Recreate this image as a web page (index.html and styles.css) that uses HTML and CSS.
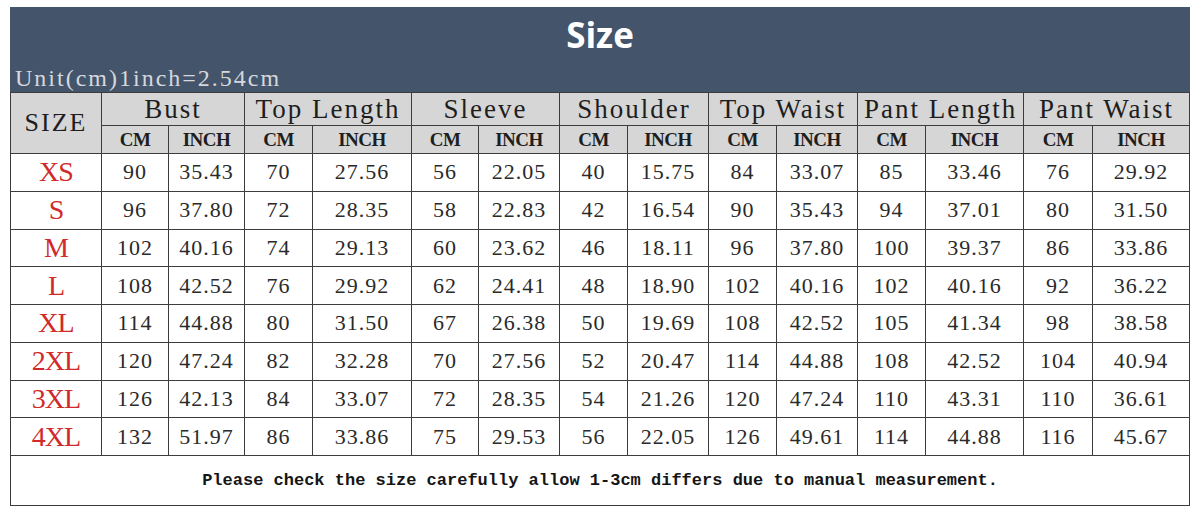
FILE: index.html
```html
<!DOCTYPE html>
<html lang="en">
<head>
  <meta charset="UTF-8">
  <meta name="viewport" content="width=device-width, initial-scale=1.0">
  <title>Size Chart</title>
  <link rel="stylesheet" href="styles.css">
</head>
<body>
  <div class="chart">
    <header class="chart-head">
      <h1>Size</h1>
      <p class="unit">Unit(cm)1inch=2.54cm</p>
    </header>
    <table class="size-table">
      <colgroup>
        <col style="width:91px">
        <col style="width:67px"><col style="width:76px">
        <col style="width:68px"><col style="width:99px">
        <col style="width:67px"><col style="width:81px">
        <col style="width:68px"><col style="width:81px">
        <col style="width:68px"><col style="width:81px">
        <col style="width:68px"><col style="width:98px">
        <col style="width:69px"><col style="width:97px">
      </colgroup>
      <thead>
        <tr class="group-row">
          <th rowspan="2" class="size-head">SIZE</th>
          <th colspan="2">Bust</th>
          <th colspan="2">Top Length</th>
          <th colspan="2">Sleeve</th>
          <th colspan="2">Shoulder</th>
          <th colspan="2">Top Waist</th>
          <th colspan="2">Pant Length</th>
          <th colspan="2">Pant Waist</th>
        </tr>
        <tr class="unit-row">
          <th>CM</th><th>INCH</th>
          <th>CM</th><th>INCH</th>
          <th>CM</th><th>INCH</th>
          <th>CM</th><th>INCH</th>
          <th>CM</th><th>INCH</th>
          <th>CM</th><th>INCH</th>
          <th>CM</th><th>INCH</th>
        </tr>
      </thead>
      <tbody>
        <tr>
          <td class="size">XS</td>
          <td>90</td><td>35.43</td><td>70</td><td>27.56</td><td>56</td><td>22.05</td><td>40</td><td>15.75</td>
          <td>84</td><td>33.07</td><td>85</td><td>33.46</td><td>76</td><td>29.92</td>
        </tr>
        <tr>
          <td class="size">S</td>
          <td>96</td><td>37.80</td><td>72</td><td>28.35</td><td>58</td><td>22.83</td><td>42</td><td>16.54</td>
          <td>90</td><td>35.43</td><td>94</td><td>37.01</td><td>80</td><td>31.50</td>
        </tr>
        <tr>
          <td class="size">M</td>
          <td>102</td><td>40.16</td><td>74</td><td>29.13</td><td>60</td><td>23.62</td><td>46</td><td>18.11</td>
          <td>96</td><td>37.80</td><td>100</td><td>39.37</td><td>86</td><td>33.86</td>
        </tr>
        <tr>
          <td class="size">L</td>
          <td>108</td><td>42.52</td><td>76</td><td>29.92</td><td>62</td><td>24.41</td><td>48</td><td>18.90</td>
          <td>102</td><td>40.16</td><td>102</td><td>40.16</td><td>92</td><td>36.22</td>
        </tr>
        <tr>
          <td class="size">XL</td>
          <td>114</td><td>44.88</td><td>80</td><td>31.50</td><td>67</td><td>26.38</td><td>50</td><td>19.69</td>
          <td>108</td><td>42.52</td><td>105</td><td>41.34</td><td>98</td><td>38.58</td>
        </tr>
        <tr>
          <td class="size">2XL</td>
          <td>120</td><td>47.24</td><td>82</td><td>32.28</td><td>70</td><td>27.56</td><td>52</td><td>20.47</td>
          <td>114</td><td>44.88</td><td>108</td><td>42.52</td><td>104</td><td>40.94</td>
        </tr>
        <tr>
          <td class="size">3XL</td>
          <td>126</td><td>42.13</td><td>84</td><td>33.07</td><td>72</td><td>28.35</td><td>54</td><td>21.26</td>
          <td>120</td><td>47.24</td><td>110</td><td>43.31</td><td>110</td><td>36.61</td>
        </tr>
        <tr>
          <td class="size">4XL</td>
          <td>132</td><td>51.97</td><td>86</td><td>33.86</td><td>75</td><td>29.53</td><td>56</td><td>22.05</td>
          <td>126</td><td>49.61</td><td>114</td><td>44.88</td><td>116</td><td>45.67</td>
        </tr>
      </tbody>
      <tfoot>
        <tr>
          <td colspan="15" class="note">Please check the size carefully allow 1-3cm differs due to manual measurement.</td>
        </tr>
      </tfoot>
    </table>
  </div>
</body>
</html>
```

FILE: styles.css
```css
body {
  margin: 0;
  padding: 0;
  background: #ffffff;
  font-family: 'Liberation Serif', 'Times New Roman', serif;
}

.chart {
  width: 1180px;
  margin: 7px 0 0 10px;
}

.chart-head {
  height: 85px;
  background: #44546a;
  display: flex;
  flex-direction: column;
  justify-content: space-between;
}

.chart-head h1 {
  margin: 0;
  padding-top: 11px;
  text-align: center;
  color: #ffffff;
  font-family: 'Open Sans', sans-serif;
  font-weight: 700;
  font-size: 35px;
  line-height: 34px;
}

.unit {
  margin: 0 0 2px 5px;
  color: #d5d8dd;
  font-size: 24px;
  line-height: 24px;
  letter-spacing: 2px;
}

.size-table {
  width: 1180px;
  table-layout: fixed;
  border-collapse: collapse;
  border: 1px solid #777777;
}

.size-table th,
.size-table td {
  border: 1px solid #3c3c3c;
  padding: 0;
  text-align: center;
  white-space: nowrap;
  overflow: hidden;
}

.group-row th {
  height: 32px;
  background: #d6d6d6;
  color: #1e1e1e;
  font-weight: 400;
  font-size: 27px;
  line-height: 30px;
  letter-spacing: 2px;
}

.size-table .size-head {
  background: #d6d6d6;
  font-size: 26px;
}

.unit-row th {
  height: 27px;
  background: #d6d6d6;
  color: #1e1e1e;
  font-weight: 700;
  font-size: 19px;
  letter-spacing: -0.5px;
}

tbody td {
  height: 36.75px;
  color: #2a2a2a;
  font-size: 22px;
  letter-spacing: 1px;
}

tbody td.size {
  color: #d02a2a;
  font-size: 28px;
  letter-spacing: -1px;
}

.note {
  height: 49px;
  color: #151515;
  font-family: 'Liberation Mono', monospace;
  font-weight: 700;
  font-size: 17px;
  letter-spacing: 0;
}
```
